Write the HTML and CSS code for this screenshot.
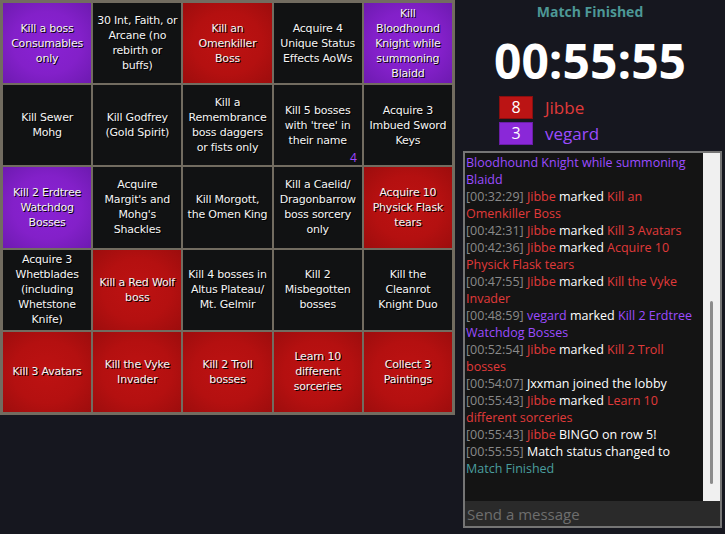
FILE: index.html
```html
<!DOCTYPE html>
<html>
<head>
<meta charset="utf-8">
<link rel="stylesheet" href="styles.css">
</head>
<body>
<div class="page">
  <div class="board">
    <div class="cell purple"><span>Kill a boss Consumables only</span></div>
    <div class="cell"><span>30 Int, Faith, or Arcane (no rebirth or buffs)</span></div>
    <div class="cell red"><span>Kill an Omenkiller Boss</span></div>
    <div class="cell"><span>Acquire 4 Unique Status Effects AoWs</span></div>
    <div class="cell purple"><span>Kill Bloodhound Knight while summoning Blaidd</span></div>

    <div class="cell"><span>Kill Sewer Mohg</span></div>
    <div class="cell"><span>Kill Godfrey (Gold Spirit)</span></div>
    <div class="cell"><span>Kill a Remembrance boss daggers or fists only</span></div>
    <div class="cell"><span>Kill 5 bosses with 'tree' in their name</span><em class="counter">4</em></div>
    <div class="cell"><span>Acquire 3 Imbued Sword Keys</span></div>

    <div class="cell purple"><span>Kill 2 Erdtree Watchdog Bosses</span></div>
    <div class="cell"><span>Acquire Margit's and Mohg's Shackles</span></div>
    <div class="cell"><span>Kill Morgott, the Omen King</span></div>
    <div class="cell"><span>Kill a Caelid/ Dragonbarrow boss sorcery only</span></div>
    <div class="cell red"><span>Acquire 10 Physick Flask tears</span></div>

    <div class="cell"><span>Acquire 3 Whetblades (including Whetstone Knife)</span></div>
    <div class="cell red"><span>Kill a Red Wolf boss</span></div>
    <div class="cell"><span>Kill 4 bosses in Altus Plateau/ Mt. Gelmir</span></div>
    <div class="cell"><span>Kill 2 Misbegotten bosses</span></div>
    <div class="cell"><span>Kill the Cleanrot Knight Duo</span></div>

    <div class="cell red"><span>Kill 3 Avatars</span></div>
    <div class="cell red"><span>Kill the Vyke Invader</span></div>
    <div class="cell red"><span>Kill 2 Troll bosses</span></div>
    <div class="cell red"><span>Learn 10 different sorceries</span></div>
    <div class="cell red"><span>Collect 3 Paintings</span></div>
  </div>

  <div class="side">
    <div class="status">Match Finished</div>
    <div class="timer">00:55:55</div>
    <div class="players">
      <div class="player"><span class="score score-red">8</span><span class="pname c-red">Jibbe</span></div>
      <div class="player"><span class="score score-purple">3</span><span class="pname c-purple">vegard</span></div>
    </div>
    <div class="chat">
      <div class="log-row">
        <div class="log">
          <div class="msg"><span class="ts">[00:29:51]</span> <span class="c-purple">vegard</span> marked <span class="c-purple">Kill Bloodhound Knight while summoning Blaidd</span></div>
          <div class="msg"><span class="ts">[00:32:29]</span> <span class="c-red">Jibbe</span> marked <span class="c-red">Kill an Omenkiller Boss</span></div>
          <div class="msg"><span class="ts">[00:42:31]</span> <span class="c-red">Jibbe</span> marked <span class="c-red">Kill 3 Avatars</span></div>
          <div class="msg"><span class="ts">[00:42:36]</span> <span class="c-red">Jibbe</span> marked <span class="c-red">Acquire 10 Physick Flask tears</span></div>
          <div class="msg"><span class="ts">[00:47:55]</span> <span class="c-red">Jibbe</span> marked <span class="c-red">Kill the Vyke Invader</span></div>
          <div class="msg"><span class="ts">[00:48:59]</span> <span class="c-purple">vegard</span> marked <span class="c-purple">Kill 2 Erdtree Watchdog Bosses</span></div>
          <div class="msg"><span class="ts">[00:52:54]</span> <span class="c-red">Jibbe</span> marked <span class="c-red">Kill 2 Troll bosses</span></div>
          <div class="msg"><span class="ts">[00:54:07]</span> Jxxman joined the lobby</div>
          <div class="msg"><span class="ts">[00:55:43]</span> <span class="c-red">Jibbe</span> marked <span class="c-red">Learn 10 different sorceries</span></div>
          <div class="msg"><span class="ts">[00:55:43]</span> <span class="c-red">Jibbe</span> BINGO on row 5!</div>
          <div class="msg"><span class="ts">[00:55:55]</span> Match status changed to <span class="c-teal">Match Finished</span></div>
        </div>
        <div class="scrollbar"><div class="thumb"></div></div>
      </div>
      <input class="send" type="text" placeholder="Send a message">
    </div>
  </div>
</div>
</body>
</html>
```
FILE: styles.css
```css
html, body {
  margin: 0;
  padding: 0;
  background: #16171f;
  width: 725px;
  height: 534px;
  overflow: hidden;
}

.page {
  display: flex;
  align-items: flex-start;
}

.board {
  width: 455px;
  height: 415px;
  box-sizing: border-box;
  padding: 3px;
  background: #726c60;
  display: grid;
  grid-template-columns: repeat(5, 1fr);
  grid-template-rows: repeat(5, 1fr);
  gap: 2px;
  flex: none;
}

.cell {
  position: relative;
  display: flex;
  align-items: center;
  justify-content: center;
  text-align: center;
  padding: 0 3px;
  background: #111213;
  color: #f4f4f4;
  font-family: "DejaVu Sans", sans-serif;
  font-size: 11px;
  line-height: 15px;
  letter-spacing: -0.2px;
  text-shadow: 1px 1px 0 #000;
  overflow: hidden;
}

.cell.red {
  background: radial-gradient(ellipse at center, #bd1212 0%, #b41010 55%, #9c0d0d 100%);
}

.cell.purple {
  background: radial-gradient(ellipse at center, #8a22d4 0%, #8320c9 55%, #6d1ab0 100%);
}

.counter {
  position: absolute;
  right: 5px;
  bottom: 0;
  font-style: normal;
  font-family: "Open Sans", sans-serif;
  font-size: 12px;
  line-height: 14px;
  letter-spacing: 0;
  color: #a046ff;
  text-shadow: none;
}

.side {
  flex: 1;
  display: flex;
  flex-direction: column;
  font-family: "Open Sans", sans-serif;
}

.status {
  text-align: center;
  font-weight: 700;
  font-size: 14px;
  line-height: 24px;
  color: #4d9896;
}

.timer {
  margin-top: 10px;
  text-align: center;
  font-weight: 700;
  font-size: 48px;
  line-height: 54px;
  color: #ffffff;
}

.players {
  margin-top: 8px;
  padding-left: 44px;
  display: flex;
  flex-direction: column;
  gap: 3px;
}

.player {
  display: flex;
  align-items: center;
  height: 23px;
}

.score {
  box-sizing: border-box;
  width: 34px;
  height: 23px;
  border: 1px solid #7a0d0d;
  color: #fff;
  font-size: 16px;
  line-height: 21px;
  text-align: center;
}

.score-red {
  background: #bb1414;
  border-color: #8a0f0f;
}

.score-purple {
  background: #8a28d8;
  border-color: #6a1ea8;
}

.pname {
  margin-left: 12px;
  font-size: 17px;
  line-height: 23px;
}

.c-red { color: #e03a3a; }
.c-purple { color: #9c4cff; }
.c-teal { color: #4a9e9e; }
.ts { color: #8a8a8a; }

.chat {
  margin: 6px 3px 0 8px;
  height: 377px;
  box-sizing: border-box;
  border: 2px solid #757575;
  background: #141414;
  display: flex;
  flex-direction: column;
}

.log-row {
  flex: 1;
  display: flex;
  min-height: 0;
}

.log {
  flex: 1;
  min-width: 0;
  overflow: hidden;
  display: flex;
  flex-direction: column;
  justify-content: flex-end;
  padding: 0 2px 24px 1px;
  color: #ffffff;
  font-size: 12.5px;
  line-height: 17px;
}

.msg {
  flex: none;
}

.scrollbar {
  width: 17px;
  flex: none;
  background: #f0f0f0;
  display: flex;
  justify-content: center;
}

.thumb {
  width: 3px;
  margin-top: 148px;
  height: 183px;
  background: #8c8c8c;
  border-radius: 2px;
}

.send {
  display: block;
  height: 25px;
  box-sizing: border-box;
  margin: 0;
  border: none;
  outline: none;
  padding: 0 2px;
  background: #2a2a2a;
  color: #ddd;
  font-family: "Open Sans", sans-serif;
  font-size: 15px;
  width: 100%;
}

.send::placeholder {
  color: #6e6e6e;
}
```
